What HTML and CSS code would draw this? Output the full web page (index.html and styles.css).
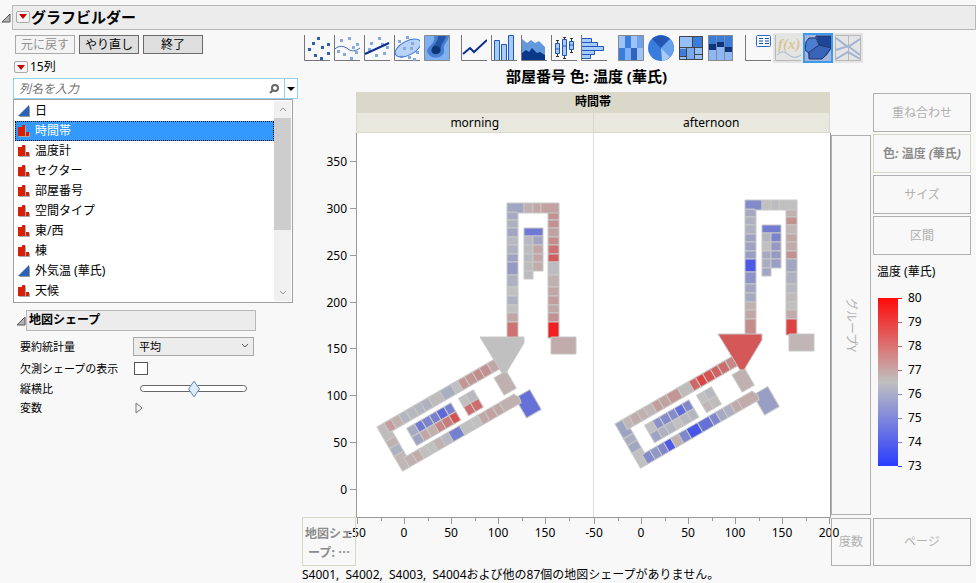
FILE: index.html
```html
<!doctype html>
<html lang="ja">
    <head>
        <meta charset="utf-8">
        <title>グラフビルダー</title>
        <meta name="viewport" content="width=device-width, initial-scale=1"/>
        <link rel="stylesheet" href="styles.css">
    </head>
    <body>
        <header class="outline">
            <svg class="disclosure" width="10" height="10" viewBox="0 0 10 10"><path d="M9 1V9H1Z"/></svg>
            <div class="outline-title">
                <button class="red-menu" aria-label="メニュー"><svg width="8" height="5" viewBox="0 0 8 5"><path d="M0 0H8L4 5Z"/></svg></button>
                <h1>グラフビルダー</h1>
            </div>
        </header>
        <div class="main">
            <div class="sidebar">
                <div class="actions">
                    <button disabled>元に戻す</button>
                    <button>やり直し</button>
                    <button>終了</button>
                </div>
                <div class="columns-title">
                    <button class="red-menu" aria-label="列メニュー"><svg width="8" height="5" viewBox="0 0 8 5"><path d="M0 0H8L4 5Z"/></svg></button>
                    <span>15列</span>
                </div>
                <div class="search">
                    <input type="text" placeholder="列名を入力" aria-label="列名を入力">
                    <svg class="search-icon" width="10" height="10" viewBox="0 0 10 10"><circle cx="6" cy="4" r="3"/><path d="M4 6L1 9"/></svg>
                    <button class="search-menu" aria-label="検索オプション"><svg width="8" height="4" viewBox="0 0 8 4"><path d="M0 0H8L4 4Z"/></svg></button>
                </div>
                <div class="listbox">
                    <ul role="listbox" aria-label="列">
                        <li role="option"><svg class="icon"><use href="#continuous"/></svg>日</li>
                        <li role="option" aria-selected="true"><svg class="icon"><use href="#nominal"/></svg>時間帯</li>
                        <li role="option"><svg class="icon"><use href="#nominal"/></svg>温度計</li>
                        <li role="option"><svg class="icon"><use href="#nominal"/></svg>セクター</li>
                        <li role="option"><svg class="icon"><use href="#nominal"/></svg>部屋番号</li>
                        <li role="option"><svg class="icon"><use href="#nominal"/></svg>空間タイプ</li>
                        <li role="option"><svg class="icon"><use href="#nominal"/></svg>東/西</li>
                        <li role="option"><svg class="icon"><use href="#nominal"/></svg>棟</li>
                        <li role="option"><svg class="icon"><use href="#continuous"/></svg>外気温 (華氏)</li>
                        <li role="option"><svg class="icon"><use href="#nominal"/></svg>天候</li>
                    </ul>
                    <div class="scrollbar">
                        <svg width="8" height="5" viewBox="0 0 8 5"><path d="M1 4L4 1L7 4"/></svg>
                        <div class="scroll-track"><div class="scroll-thumb"></div></div>
                        <svg width="8" height="5" viewBox="0 0 8 5"><path d="M1 1L4 4L7 1"/></svg>
                    </div>
                </div>
                <div class="panel-title">
                    <svg class="disclosure" width="10" height="10" viewBox="0 0 10 10"><path d="M9 1V9H1Z"/></svg>
                    <h2>地図シェープ</h2>
                </div>
                <div class="options">
                    <label for="stat">要約統計量</label>
                    <div class="select">
                        <select id="stat"><option>平均</option></select>
                        <svg width="8" height="5" viewBox="0 0 8 5"><path d="M1 1L4 4L7 1"/></svg>
                    </div>
                    <label for="missing">欠測シェープの表示</label>
                    <input id="missing" type="checkbox">
                    <label for="aspect">縦横比</label>
                    <input id="aspect" type="range" min="0" max="100" value="50">
                    <span id="vars">変数</span>
                    <button class="expand" aria-labelledby="vars"><svg width="8" height="12" viewBox="0 0 8 12"><path d="M1 1L7 6L1 11Z"/></svg></button>
                </div>
            </div>

            <div class="builder">
                <div class="toolbar">
                    <div class="tool-group">
                        <button aria-label="点"><svg viewBox="0 0 26 26"><path class="axis" d="M.5 0V25.5H26"/><path class="dots" d="M13 2h3v3h-3zM8 7h3v3H8zM23 8h3v3h-3zM17 11h3v3h-3zM4 13h3v3H4zM23 17h3v3h-3zM10 19h3v3h-3zM16 22h3v3h-3z"/></svg></button>
                        <button aria-label="平滑線"><svg viewBox="0 0 26 26"><path class="axis" d="M.5 0V25.5H26"/><path class="dots pale" d="M14 2h3v3h-3zM6 4h3v3H6zM22 8h3v3h-3zM18 11h3v3h-3zM3 15h3v3H3zM21 16h3v3h-3zM9 18h3v3H9zM16 22h3v3h-3z"/><path class="line" d="M1 14C5 10 10 11 14 14S22 16 26 13"/></svg></button>
                        <button aria-label="回帰直線"><svg viewBox="0 0 26 26"><path class="axis" d="M.5 0V25.5H26"/><path class="dots pale" d="M14 2h3v3h-3zM6 7h3v3H6zM22 11h3v3h-3zM17 8h3v3h-3zM4 13h3v3H4zM19 17h3v3h-3zM11 19h3v3h-3z"/><path class="line dark" d="M1 19L25 8"/></svg></button>
                        <button aria-label="楕円"><svg viewBox="0 0 26 26"><path class="axis" d="M.5 0V25.5H26"/><path class="dots pale" d="M12 1h3v3h-3zM4 5h3v3H4zM6 20h3v3H6zM14 21h3v3h-3zM22 16h3v3h-3zM19 23h3v3h-3z"/><ellipse cx="14" cy="13" rx="14" ry="7" transform="rotate(-28 14 13)" fill="#a9c8f5" fill-opacity=".8" stroke="#3877d8"/><path class="dots pale" d="M17 7h3v3h-3zM9 12h3v3H9zM16 12h3v3h-3z"/></svg></button>
                        <button aria-label="等高線"><svg viewBox="0 0 26 26"><path d="M.5.5H25.5V25.5H.5Z" fill="#7fb0f2" stroke="#888"/><path d="M10 1H25C24 7 19 9 20 14C22 24 5 26 3 16C3 11 12 9 10 1Z" fill="#4a7fd0"/><path d="M14 1H22C21 6 16 10 17 14C18 20 8 21 7 16C8 10 14 8 14 1Z" fill="#2456a8"/><circle cx="12" cy="15" r="4" fill="#0c3774"/></svg></button>
                    </div>
                    <div class="tool-group">
                        <button aria-label="折れ線"><svg viewBox="0 0 26 26"><path class="axis" d="M.5 0V25.5H26"/><path class="line dark" d="M2 19L9 13L13 17L26 5"/></svg></button>
                        <button aria-label="棒"><svg viewBox="0 0 26 26"><path class="axis" d="M.5 0V25.5H26"/><path class="bars" d="M3.500 25V5.500H8.500V25M10.500 25V9.500H15.500V25M17.500 25V.5H22.500V25"/></svg></button>
                        <button aria-label="面"><svg viewBox="0 0 26 26"><path d="M1 4L6 8L10 5L14 8L18 6L24 12V25H1Z" fill="#6298dc"/><path d="M1 18L5 15L8 17L11 13L16 18L19 17L24 20V25H1Z" fill="#0a3888"/><path class="axis" d="M.5 0V25.5H26"/></svg></button>
                        <button aria-label="箱ひげ図"><svg viewBox="0 0 26 26"><path class="axis" d="M.5 0V25.5H26"/><path d="M6.500 5V22M13.500 2V24M20.500 3V18M5 5.500H8M5 21.500H8M12 2.500H15M12 23.500H15M19 3.500H22M19 17.500H22" stroke="#333"/><path class="bars" d="M4.500 8.500h4v10h-4zM11.500 4.500h4v16h-4zM18.500 6.500h4v8h-4zM4.500 14h4M11.500 11h4M18.500 10h4"/></svg></button>
                        <button aria-label="ヒストグラム"><svg viewBox="0 0 26 26"><path class="bars" d="M1 3.500H10.500V7.500H1M1 7.500H16.500V11.500H1M1 11.500H22.500V15.500H1M1 15.500H13.500V19.500H1M1 19.500H9.500V23.500H1"/><path class="axis" d="M.5 0V25.5H26"/></svg></button>
                    </div>
                    <div class="tool-group">
                        <button aria-label="ヒートマップ"><svg viewBox="0 0 26 26"><path fill="#9cc4fb" d="M0 0H26V26H0Z"/><path fill="#3b7ddd" d="M7 1h6v12H7zM13 13h6v12h-6zM1 13h6v12H1z"/><path fill="#6fa2ea" d="M19 1h6v12h-6z"/><path fill="#7fb0f5" d="M7 13h6v12H7z"/><path fill="#2f63bd" d="M13 13h6v12h-6z"/><path class="frame" d="M.5.5H25.5V25.5H.5Z"/></svg></button>
                        <button aria-label="円"><svg viewBox="0 0 26 26"><circle cx="13" cy="13" r="13" fill="#3a7cdd"/><path fill="#2356b5" d="M13 13L4 4A13 13 0 0 1 22 4Z"/><path fill="#66a3ec" d="M13 13L22 4A13 13 0 0 1 22 22Z"/><path fill="#a8cbfb" d="M13 13L22 22A13 13 0 0 1 14 26Z"/></svg></button>
                        <button aria-label="ツリーマップ"><svg viewBox="0 0 26 26"><path fill="#97bff7" d="M1 1H25V25H1Z"/><path fill="#3b7ddd" d="M15 2h9v11h-9zM2 14h6v8H2z"/><path fill="#7aa9ee" d="M9 13h8v12H9z"/><path d="M1.500 1.500H24.500V24.500H1.500ZM14.500 1V12M1 12.500H25M8.500 12V25M16.500 12V25M16 19.500H25M1 21.500H8" fill="none" stroke="#444"/></svg></button>
                        <button aria-label="モザイク図"><svg viewBox="0 0 26 26"><path fill="#8db7f5" d="M0 0H25V26H0Z"/><path fill="#3b7ddd" d="M1 1h8v8H1zM9 1h8v6H9zM17 1h8v11h-8z"/><path fill="#0b357e" d="M1 9h8v6H1zM9 7h8v5H9zM17 12h8v5h-8z"/><path class="frame" d="M.5.5H24.500V25.500H.5ZM8.500 0V26M16.500 0V26"/></svg></button>
                    </div>
                    <div class="tool-group">
                        <button aria-label="キャプションボックス"><svg viewBox="0 0 26 26"><path class="axis" d="M.5 0V25.5H26"/><rect x="11.500" y=".5" width="14" height="11" rx="1" fill="#f4f9ff" stroke="#2c68c8"/><path d="M14 3.500h4M14 6h4M14 8.500h4M20 3.500h4M20 6h4M20 8.500h4" stroke="#1c4fae"/></svg></button>
                        <button class="off" disabled aria-label="計算式"><svg viewBox="0 0 26 26"><path class="axis" d="M.5 0V25.5H26"/><text class="formula" x="3" y="14">f(x)</text><path class="line" d="M2 20C7 15 10 17 14 20S21 23 26 20"/></svg></button>
                        <button class="on" aria-label="地図シェープ" aria-pressed="true"><svg viewBox="0 0 26 26"><path fill="#4b7dd0" d="M4 3H11L14 10L3 18L0 15L1 7Z"/><path fill="#1e4697" d="M11 1H26V14L14 10Z"/><path fill="#3763b8" d="M14 10L26 14L22 20L17 24H4L3 18Z"/><path d="M4 3H11V1H26V13L21 20L17 24H4V18L0 15L1 7ZM11 3L14 10L3 18M14 10L26 13" fill="none" stroke="#20356b"/></svg></button>
                        <button class="off" disabled aria-label="パラレルプロット"><svg viewBox="0 0 26 26"><path d="M.5.5H25.5V25.5H.5ZM13.500 0V26" fill="none" stroke="#777"/><path class="line thick" d="M1 3L13 12L25 4M1 15L13 11L25 20M1 24L13 17L25 24"/></svg></button>
                    </div>
                </div>

                <h2 class="graph-title">部屋番号 色: 温度 (華氏)</h2>

                <div class="graph">
                    <div class="group-x">
                        <div class="group-name">時間帯</div>
                        <div class="group-levels"><span>morning</span><span>afternoon</span></div>
                    </div>
                    <svg class="plot" id="plot" viewBox="0 0 475 384"></svg>
                    <div class="zone zone-y">グループY</div>
                    <div class="roles">
                        <div class="zone">重ね合わせ</div>
                        <div class="zone filled">色: 温度 (華氏)</div>
                        <div class="zone">サイズ</div>
                        <div class="zone">区間</div>
                        <div class="legend">
                            <div class="legend-title">温度 (華氏)</div>
                            <div class="legend-scale">
                                <div class="ramp"></div>
                                <ol>
                                    <li>80</li><li>79</li><li>78</li><li>77</li><li>76</li><li>75</li><li>74</li><li>73</li>
                                </ol>
                            </div>
                        </div>
                    </div>
                    <div class="zone filled zone-shape">地図シェープ: …</div>
                    <div class="zone zone-freq">度数</div>
                    <div class="zone zone-page">ページ</div>
                </div>
                <p class="note">S4001,&nbsp; S4002,&nbsp; S4003,&nbsp; S4004および他の87個の地図シェープがありません。</p>
            </div>
        </div>

        <svg width="0" height="0" class="defs">
            <symbol id="continuous" viewBox="0 0 12 12"><path d="M12 1V12H1Z" fill="#999"/><path d="M11 0V11H0Z" fill="#2a62b4"/></symbol>
            <symbol id="nominal" viewBox="0 0 12 12"><path d="M1 3h3V1h4v7h4v4H1z" fill="#aaa"/><path d="M0 2h4v9H0zM4 0h3v11H4zM8 7h3v4H8z" fill="#d81e05"/></symbol>
        </svg>
        <script src="map.js"></script>
    </body>
</html>
```

FILE: styles.css
```css
* {
    box-sizing: border-box;
}
body {
    margin: 0;
    background: #f8f8f8;
    color: #000;
    font: 12px/20px "Noto Sans", "Noto Sans CJK JP", sans-serif;
}
button, input, select {
    font: inherit;
    color: inherit;
    margin: 0;
    padding: 0;
}
h1, h2, p, ul, ol {
    margin: 0;
    padding: 0;
    list-style: none;
}
svg {
    flex: none;
}
.defs {
    position: absolute;
}
.disclosure path {
    fill: #b4b4b4;
    stroke: #555;
}

/* title bar */
.outline {
    display: flex;
    align-items: center;
    gap: 1px;
    padding: 5px 0 0 1px;
}
.outline-title {
    flex: 1;
    display: flex;
    align-items: center;
    gap: 1px;
    height: 25px;
    padding: 0 0 2px 3px;
    background: #ececec;
    border: 1px solid #b8b8b8;
}
.outline-title h1 {
    font-size: 15px;
    line-height: 20px;
}
.red-menu {
    display: flex;
    align-items: center;
    justify-content: center;
    width: 14px;
    height: 12px;
    background: #f6f6f6;
    border: 1px solid #aaa;
    border-radius: 2px;
}
.red-menu path {
    fill: #c80000;
}

.main {
    display: flex;
    gap: 4px;
    padding: 3px 5px 0 13px;
}

/* sidebar */
.sidebar {
    flex: none;
    width: 285px;
}
.actions {
    display: flex;
    gap: 4px;
    padding: 2px;
}
.actions button {
    width: 60px;
    height: 19px;
    line-height: 16px;
    background: #dedede;
    border: 1px solid #6a6a6a;
}
.actions button:disabled {
    background: #f4f4f4;
    border-color: #aaa;
    color: #909090;
}
.columns-title {
    display: flex;
    align-items: center;
    gap: 2px;
    height: 22px;
    padding-left: 1px;
}
.search {
    display: flex;
    align-items: center;
    height: 21px;
    background: #fff;
    border: 1px solid #99d1f0;
}
.search input {
    flex: 1;
    min-width: 0;
    height: 19px;
    padding-left: 5px;
    border: 0;
    background: none;
    font-style: italic;
}
.search input::placeholder {
    color: #707070;
    font-style: italic;
}
.search-icon {
    margin-right: 5px;
    fill: none;
    stroke: #666;
    stroke-width: 2;
}
.search-menu {
    display: flex;
    align-items: center;
    justify-content: center;
    width: 13px;
    height: 19px;
    background: #fff;
    border: 0;
    border-left: 1px solid #99d1f0;
}
.listbox {
    display: flex;
    width: 280px;
    border: 1px solid #a0a0a0;
    background: #fff;
    padding: 1px;
}
.listbox ul {
    flex: 1;
}
.listbox li {
    display: flex;
    align-items: center;
    gap: 5px;
    height: 20px;
    padding-left: 3px;
}
.listbox li[aria-selected=true] {
    background: #3399ff;
    color: #fff;
    outline: 1px dotted #000;
    outline-offset: -1px;
}
.icon {
    width: 12px;
    height: 12px;
}
.scrollbar {
    display: flex;
    flex-direction: column;
    align-items: center;
    justify-content: space-between;
    width: 17px;
    padding: 6px 0;
    background: #f0f0f0;
}
.scrollbar path {
    fill: none;
    stroke: #999;
}
.scroll-track {
    width: 17px;
    flex: 1;
    padding: 6px 0;
}
.scroll-thumb {
    height: 112px;
    background: #cdcdcd;
}
.panel-title {
    display: flex;
    align-items: center;
    padding: 7px 0 0 3px;
}
.panel-title h2 {
    width: 230px;
    height: 21px;
    padding-left: 2px;
    line-height: 18px;
    font-size: 12px;
    background: #ececec;
    border: 1px solid #b8b8b8;
}
.options {
    display: grid;
    grid-template-columns: 113px 121px;
    grid-template-rows: 25px 19px 21px 17px;
    align-items: center;
    padding: 3px 0 0 7px;
    font-size: 11px;
}
.select {
    position: relative;
}
.select select {
    appearance: none;
    display: block;
    width: 100%;
    height: 19px;
    padding-left: 5px;
    line-height: 17px;
    border: 1px solid #a8a8a8;
    border-radius: 0;
    background: #ececec;
}
.select svg {
    position: absolute;
    right: 5px;
    top: 6px;
    fill: none;
    stroke: #555;
    pointer-events: none;
}
.options input[type=checkbox] {
    appearance: none;
    width: 14px;
    height: 13px;
    margin-left: 1px;
    background: #fff;
    border: 1px solid #555;
}
.options input[type=range] {
    appearance: none;
    width: 107px;
    height: 7px;
    margin-left: 7px;
    background: #fff;
    border: 1px solid #666;
    border-radius: 4px;
}
.options input[type=range]::-webkit-slider-thumb {
    appearance: none;
    width: 12px;
    height: 12px;
    background: #dcecfa;
    border: 1px solid #5f82ac;
    transform: scaleX(.7) rotate(45deg);
}
.expand {
    display: flex;
    width: 12px;
    margin-left: 2px;
    border: 0;
    background: none;
}
.expand path {
    fill: none;
    stroke: #777;
}

/* toolbar */
.builder {
    flex: 1;
    min-width: 0;
}
.toolbar {
    display: flex;
    gap: 7px;
}
.tool-group {
    display: flex;
}
.toolbar button {
    display: flex;
    width: 30px;
    height: 30px;
    padding: 2px;
    border: 0;
    background: none;
}
.toolbar svg {
    width: 26px;
    height: 26px;
}
.toolbar .on {
    padding: 0;
    border: 2px solid #3a9bec;
    background: #a5b4d8;
}
.toolbar .off {
    background: #e4e4e4;
}
.toolbar .off svg {
    opacity: .4;
}
.axis {
    fill: none;
    stroke: #777;
}
.dots {
    fill: #2d5fae;
}
.dots.pale {
    fill: #86a9de;
}
.line {
    fill: none;
    stroke: #3c6cba;
}
.line.dark {
    stroke: #0c2f8f;
    stroke-width: 2;
}
.line.thick {
    stroke-width: 2;
}
.bars {
    fill: #a5cbff;
    stroke: #2258b4;
}
.frame {
    fill: none;
    stroke: #888;
}
.formula {
    font: italic bold 15px "Liberation Serif", serif;
    fill: #c89a20;
}

/* graph */
.graph-title {
    padding: 2px 154px 4px 54px;
    font-size: 15px;
    line-height: 23px;
    text-align: center;
    white-space: nowrap;
}
.graph {
    display: grid;
    grid-template-columns: 54px 1fr 40px 100px;
    grid-template-rows: 41px auto 49px;
}
.group-x {
    grid-area: 1 / 2;
    margin-right: 1px;
    text-align: center;
    background: #dad8c8;
}
.group-name {
    font-weight: bold;
    height: 21px;
}
.group-levels {
    display: flex;
    gap: 1px;
    padding: 0 1px 1px;
}
.group-levels span {
    flex: 1;
    height: 19px;
    line-height: 20px;
    background: #e8e8de;
}
.plot {
    grid-area: 2 / 2;
    display: block;
    width: 100%;
    overflow: visible;
}
.plot .area {
    fill: #fff;
}
.plot .divider {
    stroke: #ddd;
}
.plot .axes {
    fill: none;
    stroke: #999;
}
.plot .y-label {
    text-anchor: end;
}
.plot .x-label {
    text-anchor: middle;
}
.shape {
    stroke: #c8c8c8;
}
.zone {
    display: flex;
    align-items: center;
    justify-content: center;
    border: 1px solid #b0b0b0;
    color: #b0b0b0;
}
.zone.filled {
    border-color: #d8d6c6;
    color: #8c8c8c;
    font-weight: bold;
    font-style: italic;
    font-synthesis: none;
    white-space: nowrap;
}
.zone-y {
    grid-area: 2 / 3;
    margin: 2px 0;
    writing-mode: vertical-rl;
    text-orientation: sideways;
}
.roles {
    grid-area: 1 / 4 / 3 / 5;
    display: flex;
    flex-direction: column;
    gap: 2px;
    padding: 1px 0 0 2px;
}
.roles .zone {
    height: 39px;
}
.zone.zone-shape {
    grid-area: 3 / 1;
    padding: 0 2px;
    font-family: "Noto Sans CJK JP", sans-serif;
    line-height: 19px;
    text-align: center;
    white-space: normal;
    line-break: anywhere;
}
.zone-freq {
    grid-area: 3 / 3;
    margin-top: 1px;
}
.zone-page {
    grid-area: 3 / 4;
    margin: 1px 0 0 2px;
}
.legend {
    padding: 5px 0 0 4px;
}
.legend-title {
    padding-bottom: 4px;
}
.legend-scale {
    display: flex;
    padding: 12px 0 0 1px;
}
.ramp {
    width: 20px;
    height: 168px;
    background: linear-gradient(#ff0a0a, #c0c0c0 50%, #2a3cff);
}
.legend-scale ol {
    margin: -12px 0;
}
.legend-scale li {
    display: flex;
    align-items: center;
    gap: 6px;
    height: 24px;
}
.legend-scale li::before {
    content: "";
    width: 4px;
    height: 1px;
    background: #d06464;
}
.legend-scale li:nth-child(n+5)::before {
    background: #8088d8;
}
.legend-scale li:first-child::before {
    background: #ff0a0a;
}
.legend-scale li:last-child::before {
    background: #2a3cff;
}
.note {
    line-height: 17px;
    white-space: nowrap;
}
```

FILE: map.js
```js
var NS = 'http://www.w3.org/2000/svg';
var plot = document.getElementById('plot');

function add(parent, name, attrs, text) {
    var el = document.createElementNS(NS, name);
    for (var key in attrs) {
        el.setAttribute(key, attrs[key]);
    }
    if (text !== undefined) {
        el.textContent = text;
    }
    parent.appendChild(el);
    return el;
}

// 73 = blue, 76.5 = gray, 80 = red
function color(t) {
    var end = t > 76.5 ? [255, 10, 10] : [42, 60, 255];
    var k = Math.min(Math.abs(t - 76.5) / 3.5, 1);
    return 'rgb(' + end.map(function(c) {
        return Math.round(192 + (c - 192) * (c > 192 ? k * k : k));
    }).join(',') + ')';
}

function poly(g, points, t) {
    add(g, 'polygon', { points: points, fill: color(t), 'class': 'shape' });
}

function rect(g, x1, y1, x2, y2, t) {
    poly(g, [x1, y1, x2, y1, x2, y2, x1, y2].join(' '), t);
}

function rowOf(g, xs, y1, y2, temps) {
    temps.forEach(function(t, i) {
        rect(g, xs[i], y1, xs[i + 1], y2, t);
    });
}

function columnOf(g, ys, x1, x2, temps) {
    temps.forEach(function(t, i) {
        rect(g, x1, ys[i], x2, ys[i + 1], t);
    });
}

function building(dx, dy, d) {
    var g = add(plot, 'g', { transform: 'translate(' + dx + ' ' + dy + ')' });
    var wing = add(g, 'g', { transform: 'translate(21 294) rotate(-30)' });
    var ys = [79, 87, 95, 104, 112, 121, 129, 142, 154, 163, 172, 180, 189, 205];

    // north wing
    columnOf(g, ys, 151, 162, d.west);
    columnOf(g, ys, 192, 203, d.east);
    poly(g, '151 70 168 70 168 80 161 80 161 79 151 79', d.corner);
    rowOf(g, [168, 177, 185, 203], 70, 80, d.north);
    rect(g, 168, 95, 187, 103, d.core);
    columnOf(g, [103, 112, 121, 129, 138, 146], 168, 177, d.coreWest);
    columnOf(g, [103, 112, 121, 129, 138], 177, 187, d.coreEast);
    rect(g, 195, 204, 220, 221, d.annex);

    // south wing, drawn along its own axis
    rowOf(wing, [8, 16, 25, 33, 42, 50, 59, 72, 85, 93, 101, 110, 118, 127, 136], 0, 11, d.upper);
    poly(wing, '0 0 8 0 8 11 11 11 11 17 0 17', d.side[0]);
    columnOf(wing, [17, 25, 34], 0, 11, d.side.slice(1, 3));
    rect(wing, 134, 44, 151, 67, d.end);
    rowOf(wing, [8, 17, 25, 33, 41, 50, 59, 72, 85, 93, 101, 110, 118], 40, 51, d.lower);
    poly(wing, '118 40 135 40 138 46 137 51 118 51', d.lowerEnd);
    poly(wing, '0 34 11 34 11 40 8 40 8 51 0 51', d.side[3]);
    rect(wing, 126, 16, 140, 36, d.stair);
    rowOf(wing, [85, 93, 102], 16, 26, d.pairTop);
    rowOf(wing, [85, 93, 102], 26, 36, d.pairBottom);
    rowOf(wing, [25, 34, 42, 51, 59, 68, 76], 16, 26, d.innerTop);
    rowOf(wing, [25, 34, 42, 51, 59, 68, 76], 26, 36, d.innerBottom);

    poly(g, '124 204 168 204 168 210 150 240 146 240', d.lobby);
}

var morning = {
    corner: 75.8,
    west: [75.9, 76.1, 75.8, 76.3, 76.1, 75.7, 75.5, 76.1, 76.5, 76.1, 76.5, 77, 78],
    east: [77.4, 77.4, 77.1, 77.5, 78, 78.4, 76.4, 76.8, 77, 77.2, 77, 77.4, 79.6],
    north: [76.8, 77, 77.1],
    core: 74.6,
    coreWest: [76.3, 76.4, 76.3, 76.6, 76.4],
    coreEast: [75.8, 77, 77, 76.9],
    annex: 76.9,
    lobby: 76.5,
    upper: [77.2, 76.8, 76.2, 76.3, 76.2, 76.1, 76.6, 76, 76.5, 77.3, 77.3, 77.5, 77.4, 77],
    side: [76.6, 76.8, 76.1, 76.7],
    lower: [76.8, 76.9, 76.5, 76.5, 76.8, 76.3, 74.8, 76.5, 76.5, 77, 77.1, 77],
    lowerEnd: 76.8,
    end: 74.4,
    stair: 76.8,
    pairTop: [76.5, 76.3],
    pairBottom: [78.1, 78.1],
    innerTop: [75.9, 74.6, 74.9, 74.8, 74.2, 74.8],
    innerBottom: [75.7, 77, 76.8, 77.6, 77.8, 78.6]
};

var afternoon = {
    corner: 75.1,
    west: [75.9, 76.1, 76.1, 75.7, 75.7, 75.6, 73.8, 75.3, 75.8, 75.9, 76.8, 77, 77.5],
    east: [76.8, 77.4, 76.7, 77, 76.9, 77.4, 75.8, 76.1, 76.3, 76.6, 76.5, 76.9, 78.9],
    north: [76.5, 76.4, 76.5],
    core: 74.7,
    coreWest: [76.2, 76.5, 75.9, 76, 75.8],
    coreEast: [74.9, 75.5, 75.5, 75.6],
    annex: 76.7,
    lobby: 78.5,
    upper: [76.7, 76.9, 76.8, 76.7, 77.2, 77.1, 77.3, 76.6, 78.2, 78.9, 78.6, 78.3, 78.1, 77.6],
    side: [75.7, 76, 75.8, 76.5],
    lower: [75.1, 75.4, 75, 73.8, 76.8, 75, 73.7, 74.4, 75, 75.9, 76.1, 76.9],
    lowerEnd: 76.9,
    end: 75.6,
    stair: 76.8,
    pairTop: [76.5, 76.3],
    pairBottom: [76.7, 76.6],
    innerTop: [76.5, 75.2, 75.1, 75.1, 74.3, 75],
    innerBottom: [75.7, 76.1, 76.2, 76.5, 76.3, 76.2]
};

add(plot, 'rect', { 'class': 'area', width: 475, height: 384 });
add(plot, 'path', { 'class': 'divider', d: 'M237.5 0V384' });

var axes = 'M.5 0V384.5H474.5V0';
for (var v = 0; v <= 350; v += 50) {
    var y = Math.round(356 - v * 0.937);
    axes += 'M-6 ' + (y + 0.5) + 'H0';
    add(plot, 'text', { 'class': 'y-label', x: -9, y: y + 5 }, v);
}
[48, 285].forEach(function(zero, panel) {
    for (var v = -50; v <= (panel ? 200 : 175); v += 25) {
        var x = Math.round(zero + v * 0.94);
        var major = v % 50 === 0;
        axes += 'M' + (x + 0.5) + ' 384V' + (major ? 391 : 388);
        if (major) {
            add(plot, 'text', { 'class': 'x-label', x: x, y: 404 }, v);
        }
    }
});
add(plot, 'path', { 'class': 'axes', d: axes });

building(0, 0, morning);
building(238, -3, afternoon);
```
